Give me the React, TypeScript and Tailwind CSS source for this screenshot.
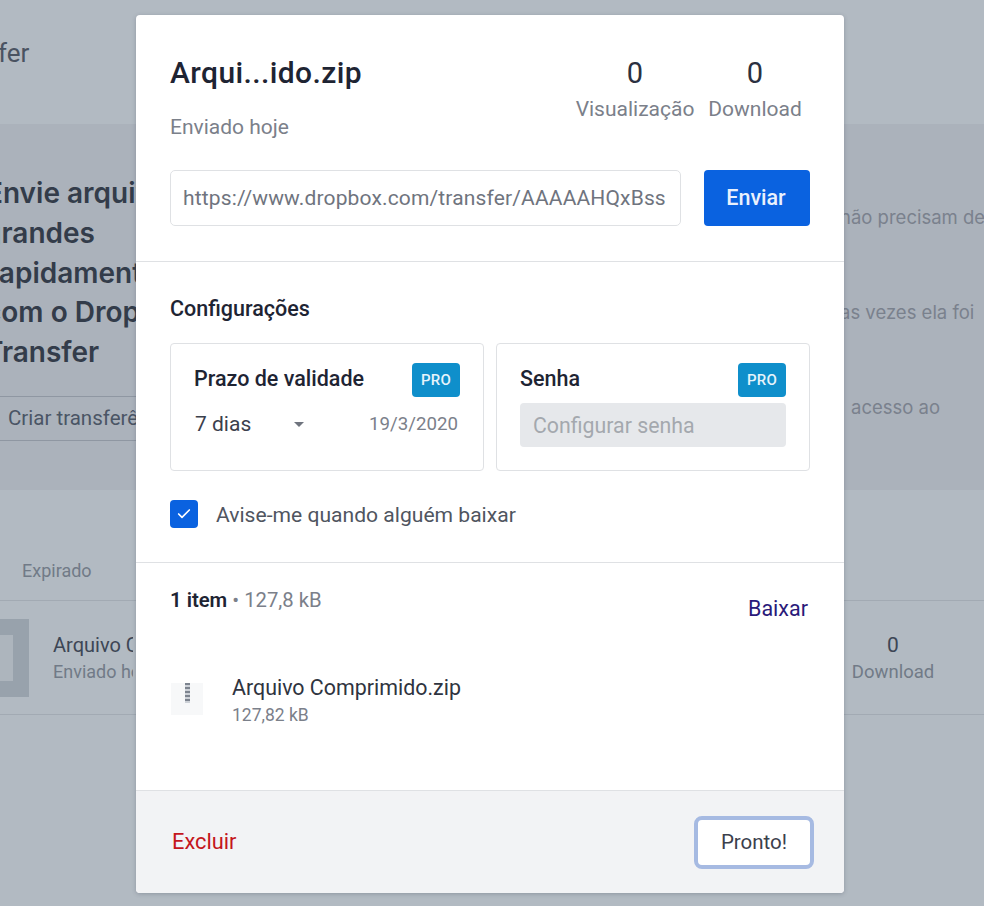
import { Check } from "lucide-react";

const font = "font-['Roboto','Liberation_Sans',sans-serif]";

function ProBadge() {
  return (
    <span className="flex h-[34px] w-[48px] items-center justify-center rounded-[4px] bg-[#0f8fcb] text-[15px] font-medium tracking-[0.2px] text-[#e6f4fb]">
      PRO
    </span>
  );
}

function Stat({ label, className }: { label: string; className: string }) {
  return (
    <div className={`mt-[1px] flex flex-col items-center ${className}`}>
      <span className="text-[29px] leading-[34px] text-[#2b3140]">0</span>
      <span className="mt-[6px] text-[21px] leading-[26px] text-[#7b808a]">{label}</span>
    </div>
  );
}

function Background() {
  return (
    <div className="flex h-full flex-col bg-[#b2bac2] text-[#59626f]">
      <div className="flex h-[124px] items-start pt-[35px]">
        <span className="ml-[-2px] text-[26px] leading-[36px] text-[#4a5361]">fer</span>
      </div>
      <div className="flex h-[366px] justify-between overflow-hidden bg-[#abb2bb]">
        <div className="flex w-[136px] flex-col overflow-hidden pt-[50px]">
          <div className="whitespace-nowrap text-[28px] font-semibold leading-[39.75px] text-[#333c4a] font-['Inter',sans-serif]">
            <p className="ml-[-14px]">Envie arquivos</p>
            <p className="ml-[-16px]">grandes</p>
            <p className="ml-[-12px]">rapidamente</p>
            <p className="ml-[-15px]">com o Dropbox</p>
            <p className="ml-[-15px]">Transfer</p>
          </div>
          <div className="mt-[23px] h-[45px] whitespace-nowrap border-y border-[#8f97a2] pl-[8px] text-[20.5px] leading-[42px] text-[#4a5565]">
            Criar transferência
          </div>
        </div>
        <div className="flex w-[140px] flex-col overflow-hidden whitespace-nowrap pt-[80px] text-[18.5px] font-['Inter',sans-serif] text-[#7a818d]">
          <p className="ml-[-4px] h-[95px]">não precisam de</p>
          <p className="ml-[-4px] h-[95px]">as vezes ela foi</p>
          <p className="ml-[7px]">acesso ao</p>
        </div>
      </div>
      <div className="flex h-[110px] items-end pb-[16px] pl-[22px] text-[18px] leading-[26px] text-[#717a87]">Expirado</div>
      <div className="flex h-[115px] items-center justify-between border-y border-[#a2aab3]">
        <div className="flex items-center gap-[24px]">
          <div className="ml-[-50px] h-[78px] w-[79px] border-[16px] border-[#98a2ac] bg-[#adb5bd]" />
          <div className="w-[80px] overflow-hidden whitespace-nowrap">
            <p className="text-[20px] leading-[28px] text-[#3d4655]">Arquivo Comprimido</p>
            <p className="text-[18px] leading-[26px] text-[#717a87]">Enviado hoje</p>
          </div>
        </div>
        <div className="mr-[50px] flex w-[82px] flex-col items-center">
          <span className="text-[21px] leading-[28px] text-[#3d4655]">0</span>
          <span className="text-[18.5px] leading-[26px] text-[#717a87]">Download</span>
        </div>
      </div>
      <div className="flex-1" />
    </div>
  );
}

function Modal() {
  return (
    <div className="absolute left-[136px] top-[15px] flex h-[878px] w-[708px] flex-col overflow-hidden rounded-[4px] bg-white shadow-[0_1px_4px_rgba(60,70,85,0.3)]">
      <section className="h-[247px] shrink-0 border-b border-[#dfe1e4] px-[34px] pt-[40px]">
        <div className="flex items-start justify-between">
          <div>
            <h1 className="text-[30px] font-medium leading-[36px] tracking-[0.4px] text-[#1e2433]">Arqui...ido.zip</h1>
            <p className="mt-[23px] text-[21px] leading-[26px] text-[#7b808a]">Enviado hoje</p>
          </div>
          <div className="mr-[8px] flex">
            <Stat label="Visualização" className="w-[118px]" />
            <Stat label="Download" className="ml-[14px] w-[94px]" />
          </div>
        </div>
        <div className="mt-[30px] flex justify-between">
          <div className="h-[56px] w-[511px] rounded-[5px] border border-[#dfe1e4] px-[12px]">
            <div className="overflow-hidden whitespace-nowrap text-[21px] leading-[55px] tracking-[0.15px] text-[#6f747e]">
              https://www.dropbox.com/transfer/AAAAAHQxBss
            </div>
          </div>
          <button className="h-[56px] w-[106px] rounded-[4px] bg-[#0a62e0] pr-[2px] text-[21.5px] font-medium text-[#e9f1fd]">Enviar</button>
        </div>
      </section>

      <section className="h-[301px] shrink-0 border-b border-[#dfe1e4] px-[34px] pt-[34px]">
        <h2 className="text-[21.5px] font-medium leading-[26px] text-[#1e2433]">Configurações</h2>
        <div className="mt-[21px] flex gap-[12px]">
          <div className="h-[128px] w-[314px] rounded-[4px] border border-[#dfe1e4] px-[23px] pt-[19px]">
            <div className="flex items-center justify-between">
              <span className="mb-[1px] text-[21.5px] font-medium text-[#1e2433]">Prazo de validade</span>
              <ProBadge />
            </div>
            <div className="mt-[14px] flex items-center text-[21px] leading-[26px]">
              <span className="ml-[1px] w-[99px] text-[#3b404c]">7 dias</span>
              <span className="h-0 w-0 border-x-[5px] border-t-[5px] border-x-transparent border-t-[#6f747e]" />
              <span className="ml-auto mr-[2px] text-[18.7px] text-[#7b808a]">19/3/2020</span>
            </div>
          </div>
          <div className="h-[128px] w-[314px] rounded-[4px] border border-[#dfe1e4] px-[23px] pt-[19px]">
            <div className="flex items-center justify-between">
              <span className="mb-[1px] text-[21.5px] font-medium text-[#1e2433]">Senha</span>
              <ProBadge />
            </div>
            <div className="mt-[6px] h-[44px] rounded-[4px] bg-[#e6e8eb] px-[13px] text-[21.3px] leading-[46px] text-[#a4a8ae]">Configurar senha</div>
          </div>
        </div>
        <div className="mt-[28px] flex items-center gap-[18px]">
          <span className="flex h-[28px] w-[28px] items-center justify-center rounded-[4px] bg-[#0a62e0]">
            <Check size={16} strokeWidth={2.5} className="text-white" />
          </span>
          <span className="mt-[2px] text-[21.1px] leading-[28px] text-[#50555f]">Avise-me quando alguém baixar</span>
        </div>
      </section>

      <section className="flex-1 px-[34px] pt-[23px]">
        <div className="flex items-start justify-between">
          <p className="text-[20.3px] leading-[28px] text-[#7b808a]">
            <span className="font-semibold text-[#1e2433]">1 item</span> • 127,8 kB
          </p>
          <button className="mr-[2px] mt-[9px] text-[21.5px] leading-[28px] text-[#2a1a7a]">Baixar</button>
        </div>
        <div className="mt-[51px] flex items-center gap-[29px] pl-[1px]">
          <div className="mb-[4px] flex h-[32px] w-[32px] justify-center bg-[#f7f8f9]">
            <div className="h-[20px] w-[5px] bg-[repeating-linear-gradient(180deg,#7d848f_0_2px,#cdd1d7_2px_4px)]" />
          </div>
          <div>
            <p className="text-[21.4px] leading-[28px] text-[#2f3440]">Arquivo Comprimido.zip</p>
            <p className="text-[17.5px] leading-[26px] text-[#7b808a]">127,82 kB</p>
          </div>
        </div>
      </section>

      <footer className="flex h-[103px] shrink-0 items-center justify-between border-t border-[#dfe1e4] bg-[#f2f3f5] pl-[36px] pr-[30px]">
        <button className="text-[21.8px] text-[#c4161c]">Excluir</button>
        <button className="h-[53px] w-[120px] rounded-[8px] border-[4px] border-[#a6bae2] bg-white text-[20.5px] text-[#3b404c]">Pronto!</button>
      </footer>
    </div>
  );
}

export default function App() {
  return (
    <div className={`relative h-[906px] w-[984px] overflow-hidden ${font}`}>
      <Background />
      <Modal />
    </div>
  );
}
